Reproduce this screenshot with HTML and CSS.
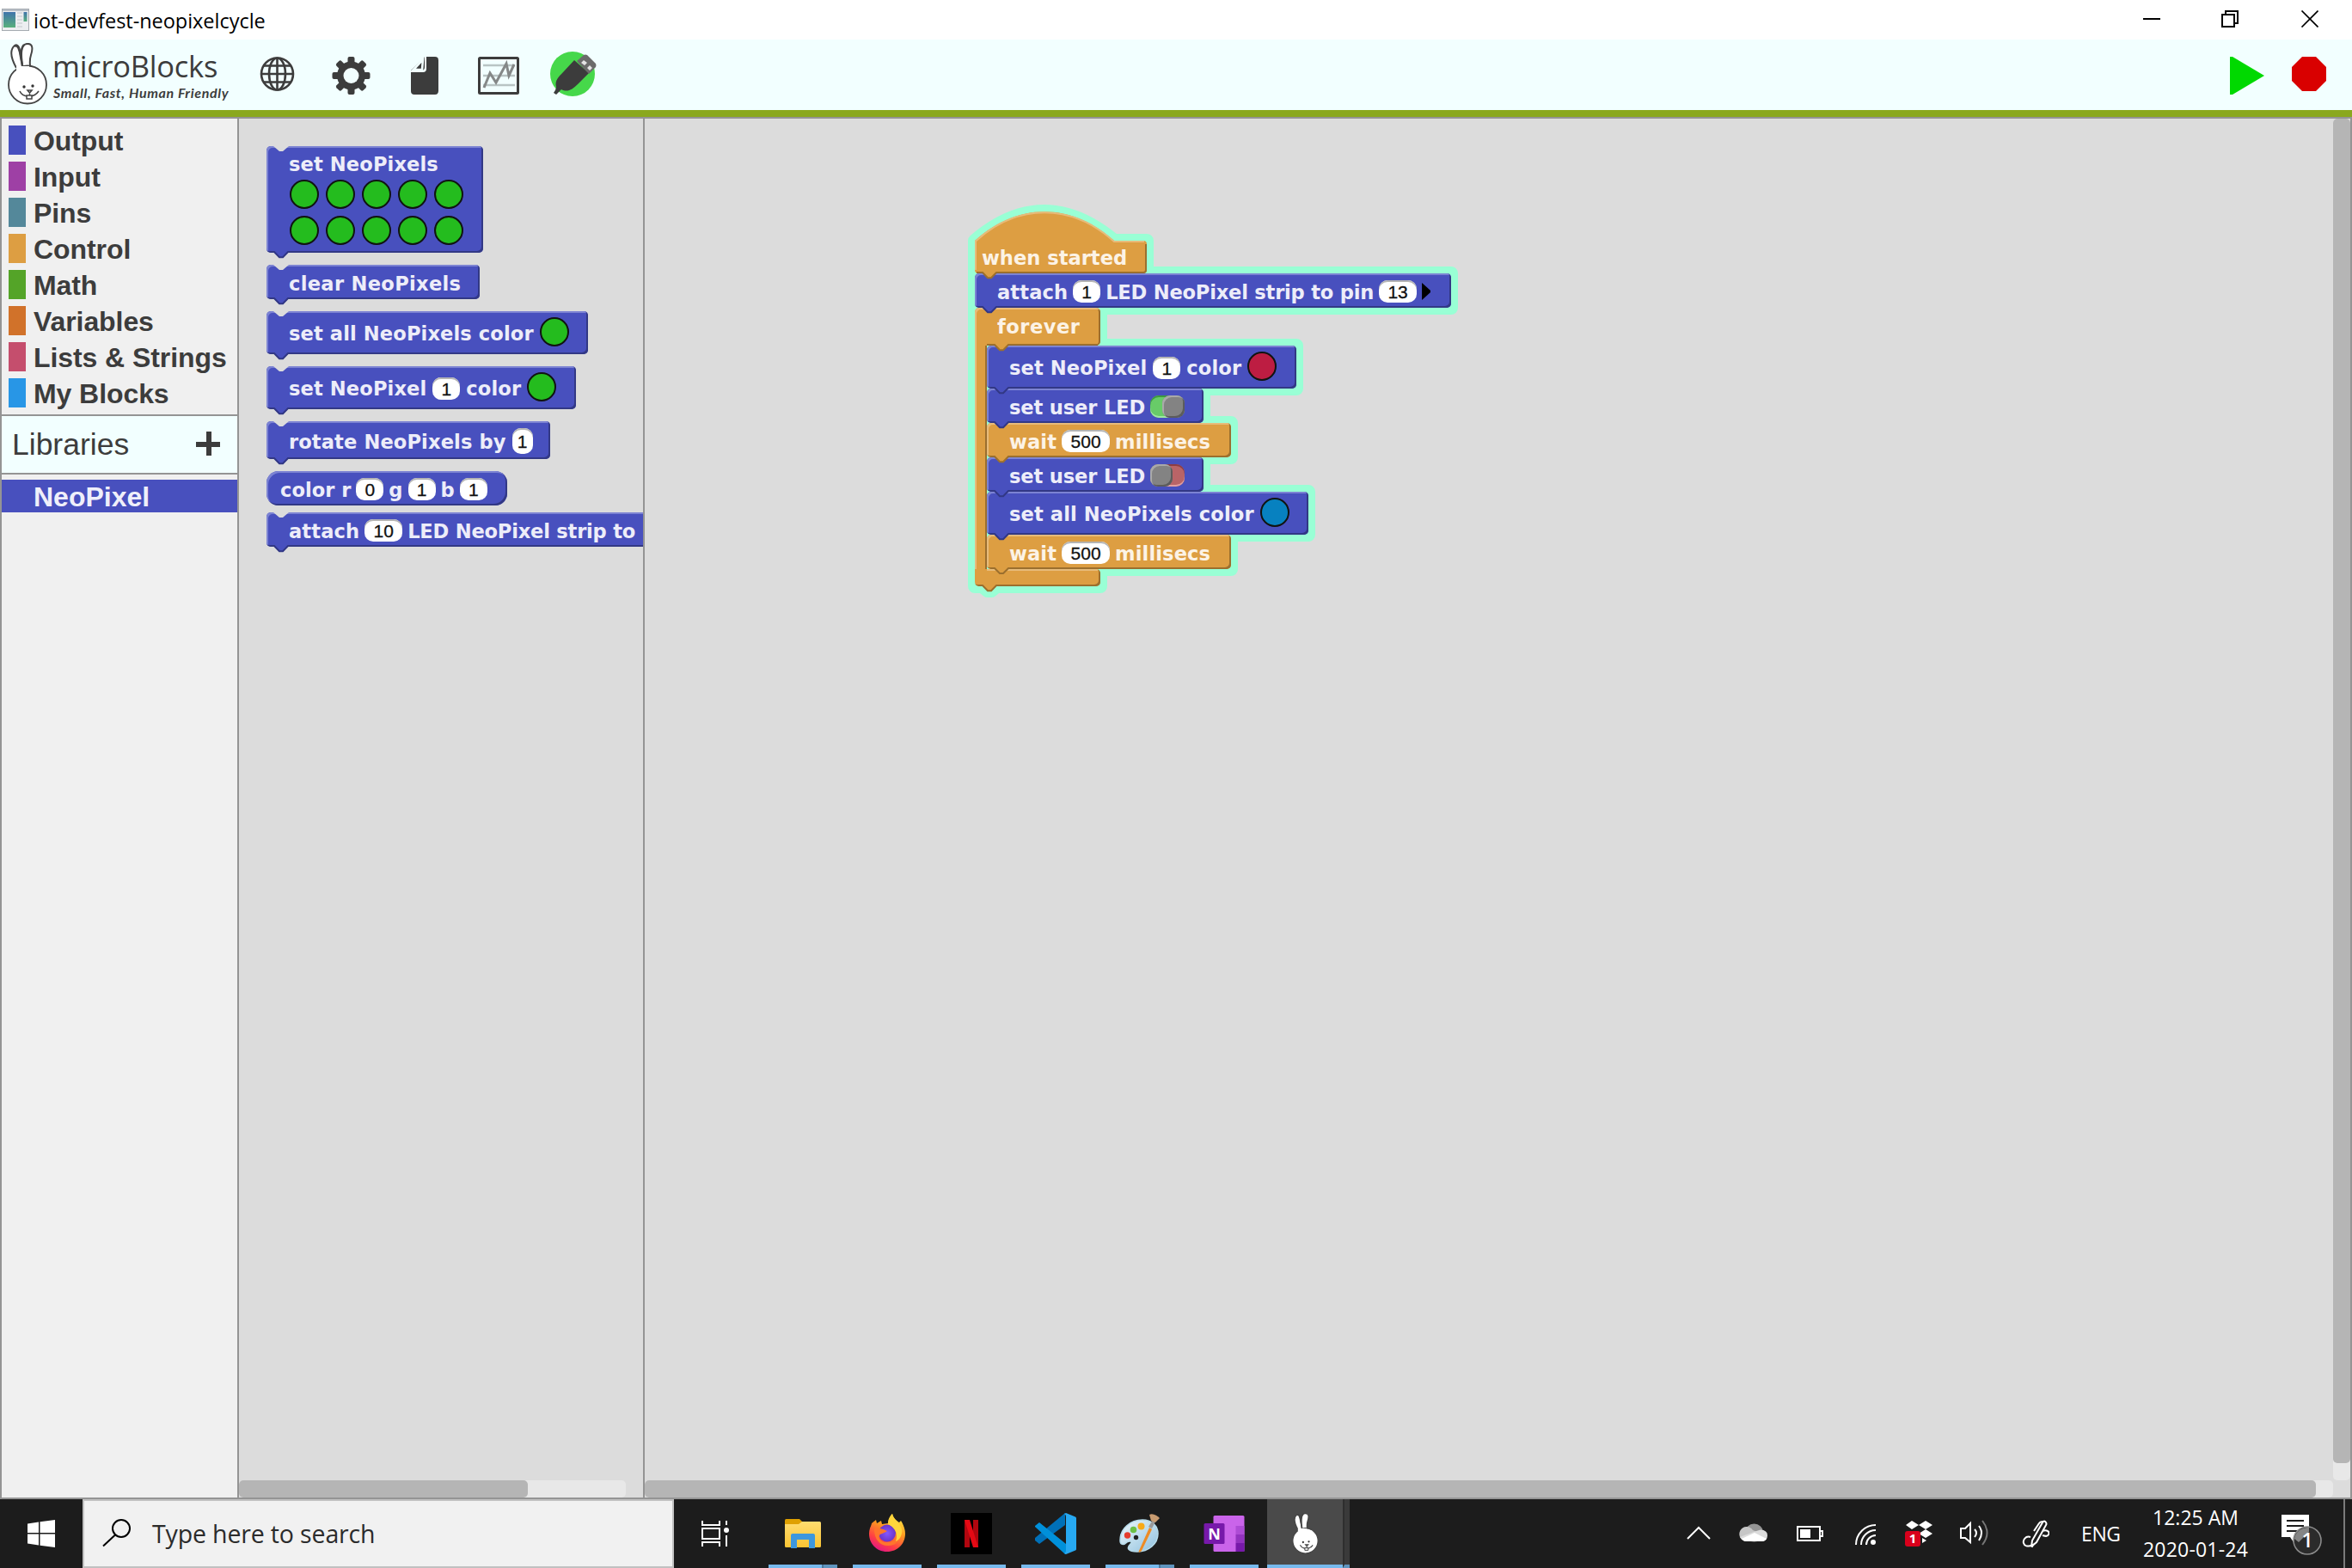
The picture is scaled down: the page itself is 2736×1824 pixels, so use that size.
FILE: index.html
```html
<!DOCTYPE html>
<html lang="en">
<head>
<meta charset="utf-8">
<title>iot-devfest-neopixelcycle</title>
<link rel="stylesheet" href="styles.css">
</head>
<body>
<svg width="0" height="0" class="defs">
  <symbol id="notch" viewBox="0 0 20 8"><path class="notch-fill" d="M1 0 L8 6 H12 L19 0Z"/></symbol>
  <symbol id="tab" viewBox="0 0 20 10"><path class="tab-fill" d="M0 0 H20 V2 H18 L12 8 H8 L2 2 H0Z"/><path class="tab-line" d="M0 1 H2 L8 7.2 H12 L18 1 H20"/></symbol>
  <symbol id="bunny" viewBox="0 0 46 72">
    <path d="M10 29 C5 20 1 9 8 3 C13 0 14 8 15 14 L17 27 M17 27 C15 16 14 2 22 1 C30 0 29 8 27 14 C25 20 26 24 26 28" fill="#fff" stroke="#444" stroke-width="2"/>
    <path d="M8 4 C12 1 14 9 15 16 L17 26 C15 14 16 5 19 2" fill="none" stroke="#444" stroke-width="2.4"/>
    <ellipse cx="23" cy="48.500" rx="22" ry="22" fill="#fff" stroke="#444" stroke-width="1.800"/>
    <path d="M10 27 H25 V32 H10Z" fill="#fff"/>
    <circle cx="19" cy="51" r="1.700" fill="#333"/><circle cx="29" cy="50" r="1.700" fill="#333"/>
    <path d="M23 55 H28 L25.500 58Z M25.500 57 V61 M14 56 C17 63 30 65 36 56" fill="none" stroke="#444" stroke-width="1.600"/>
    <path d="M22 61 H28 V65 H22Z" fill="#fff" stroke="#444" stroke-width="1.500"/>
  </symbol>
</svg>

<header class="titlebar">
  <svg class="app-icon" width="32" height="26" viewBox="0 0 32 26"><rect x=".5" y=".5" width="31" height="25" fill="#eceef0" stroke="#a5abb1"/><rect x="1" y="1" width="30" height="2" fill="#b9c0c8"/><defs><linearGradient id="ag" x1="0" y1="0" x2="0" y2="1"><stop offset="0" stop-color="#3f74ab"/><stop offset="1" stop-color="#58b07c"/></linearGradient></defs><rect x="2" y="4" width="14" height="18" fill="url(#ag)"/><path d="M18 5H24 M18 9H24 M18 13H24 M18 17H24 M18 21H24" stroke="#c2c6ca"/><rect x="25.500" y="4" width="4" height="11" fill="url(#ag)"/></svg>
  <span class="window-title">iot-devfest-neopixelcycle</span>
  <svg class="window-buttons" width="204" height="20" viewBox="0 0 204 20" fill="none" stroke="#000" stroke-width="2"><path d="M0 10H20"/><path d="M92 5H106V19H92Z M96 5V1H110V15H106"/><path d="M184.500 .5L203.500 19.500M203.500 .5L184.500 19.500" stroke-width="1.700"/></svg>
</header>

<nav class="toolbar">
  <svg class="bunny-logo" width="46" height="72"><use href="#bunny"/></svg>
  <div class="brand"><span class="brand-name">microBlocks</span><span class="brand-tag">Small, Fast, Human Friendly</span></div>
  <svg class="tools" width="394" height="56" viewBox="0 0 394 56">
    <g fill="none" stroke="#3c3c3c" stroke-width="2.600"><circle cx="20.500" cy="28" r="18.500"/><ellipse cx="20.500" cy="28" rx="9.500" ry="18.500"/><path d="M20.500 9V47M2 28H39M4.500 18.500H36.500M4.500 37.500H36.500"/></g>
    <g transform="translate(106.500 30)" fill="#3c3c3c"><g id="teeth"><rect x="-4" y="-22" width="8" height="44" rx="2"/><rect x="-22" y="-4" width="44" height="8" rx="2"/></g><use href="#teeth" transform="rotate(45)"/><circle r="16.500"/><circle r="9" fill="#f2ffff"/></g>
    <path d="M194 8H204Q208 8 208 12V48Q208 52 204 52H180Q176 52 176 48V26H190Q194 26 194 22Z" fill="#3c3c3c"/><path d="M192 8L176 24H188Q192 24 192 20Z" fill="#3c3c3c"/><path d="M190 11L179 23H189Z" fill="none" stroke="#f2ffff" stroke-width="2.600"/>
    <rect x="255.500" y="9.500" width="45" height="41" rx="1" fill="none" stroke="#3c3c3c" stroke-width="3"/><g fill="none"><path d="M260 18H297M260 30H297M260 41H297" stroke="#b9c4c4" stroke-width="2.600"/><path d="M261 44L268 27L275 38L287 16L290 30L296 17" stroke="#858888" stroke-width="3"/></g>
    <circle cx="364" cy="28" r="26" fill="#46d84a"/>
    <path d="M342 50C344 47 345 45 345 43C343 36 348 31 353 26L366 12L383 27L370 40C364 46 358 50 351 46L345 52Z" fill="#3c3c3c"/><path d="M369 13L377 6Q379 5 381 6L391 16Q392 18 391 20L383 28Z" fill="#6b6b6b"/><path d="M377 12L381 15L378 18L374 15ZM384 18L387 21L384 24L381 21Z" fill="#e4e4e4"/>
  </svg>
  <svg class="run" width="112" height="44" viewBox="0 0 112 44"><path d="M0 0L3 0L40 22L3 44H0Z" fill="#00d900"/><path d="M84 0H100L112 12V28L100 40H84L72 28V12Z" fill="#d90000"/></svg>
</nav>

<main class="workspace">
  <aside class="sidebar">
    <ul class="categories">
      <li><i class="output"></i>Output</li>
      <li><i class="input"></i>Input</li>
      <li><i class="pins"></i>Pins</li>
      <li><i class="control"></i>Control</li>
      <li><i class="math"></i>Math</li>
      <li><i class="variables"></i>Variables</li>
      <li><i class="lists"></i>Lists &amp; Strings</li>
      <li><i class="myblocks"></i>My Blocks</li>
    </ul>
    <div class="libraries"><span>Libraries</span><svg width="28" height="28" viewBox="0 0 28 28"><path d="M15 0V28M0 15H28" stroke="#3c3c3c" stroke-width="6"/></svg></div>
    <div class="library selected">NeoPixel</div>
  </aside>

  <section class="palette">
    <div class="palette-blocks">
      <div class="block blue grid-block"><svg class="notch"><use href="#notch"/></svg><span>set NeoPixels</span>
        <div class="pixels"><b class="dot"></b><b class="dot"></b><b class="dot"></b><b class="dot"></b><b class="dot"></b><b class="dot"></b><b class="dot"></b><b class="dot"></b><b class="dot"></b><b class="dot"></b></div><svg class="tab"><use href="#tab"/></svg></div>
      <div class="block blue clear"><svg class="notch"><use href="#notch"/></svg><span>clear NeoPixels</span><svg class="tab"><use href="#tab"/></svg></div>
      <div class="block blue tall set-all"><svg class="notch"><use href="#notch"/></svg><span>set all NeoPixels color</span><b class="dot"></b><svg class="tab"><use href="#tab"/></svg></div>
      <div class="block blue tall set-one"><svg class="notch"><use href="#notch"/></svg><span>set NeoPixel</span><em>1</em><span>color</span><b class="dot"></b><svg class="tab"><use href="#tab"/></svg></div>
      <div class="block blue rotate"><svg class="notch"><use href="#notch"/></svg><span>rotate NeoPixels by</span><em class="narrow">1</em><svg class="tab"><use href="#tab"/></svg></div>
      <div class="block blue reporter"><span>color r</span><em>0</em><span>g</span><em>1</em><span>b</span><em>1</em></div>
      <div class="block blue attach-10"><svg class="notch"><use href="#notch"/></svg><span>attach</span><em class="two">10</em><span class="strip">LED NeoPixel strip to pin</span><svg class="tab"><use href="#tab"/></svg></div>
    </div>
    <div class="h-track"><div class="thumb"></div></div>
  </section>

  <section class="canvas">
    <div class="script">
      <svg class="glow" width="580" height="470" viewBox="-12 -12 580 470" fill="#99ffd5" stroke="#99ffd5" stroke-width="16" stroke-linejoin="round"><path d="M0 34Q80 -34 162 34H200V72H554V112H146V156H374V206H266V246H298V286H266V326H388V376H298V416H146V436H25L19 441H15L9 436H0Z"/></svg>
      <div class="hat orange"><svg class="hat-shape" width="200" height="72" viewBox="0 0 200 72"><path d="M0 34C50 -11 112 -11 162 34H196Q200 34 200 38V68Q200 72 196 72H4Q0 72 0 68Z" fill="#dd9e42"/><path d="M1 68V34.500C50 -10 112 -10 162 35H197" fill="none" stroke="#e7bb7b" stroke-width="2"/><path d="M2 71H196Q199 71 199 68V38" fill="none" stroke="#9b6f2e" stroke-width="2"/></svg><span>when started</span><svg class="tab"><use href="#tab"/></svg></div>
      <div class="block blue attach-1"><span>attach</span><em>1</em><span class="strip">LED NeoPixel strip to pin</span><em class="two">13</em><i class="arrow"></i><svg class="tab"><use href="#tab"/></svg></div>
      <div class="loop orange">
        <div class="block orange loop-head"><span>forever</span><svg class="tab"><use href="#tab"/></svg></div>
        <div class="loop-body">
          <div class="block blue tall set-one"><span>set NeoPixel</span><em>1</em><span>color</span><b class="dot red"></b><svg class="tab"><use href="#tab"/></svg></div>
          <div class="block blue led"><span>set user LED</span><i class="toggle on"></i><svg class="tab"><use href="#tab"/></svg></div>
          <div class="block orange wait"><span>wait</span><em class="three">500</em><span>millisecs</span><svg class="tab"><use href="#tab"/></svg></div>
          <div class="block blue led"><span>set user LED</span><i class="toggle"></i><svg class="tab"><use href="#tab"/></svg></div>
          <div class="block blue tall set-all"><span>set all NeoPixels color</span><b class="dot azure"></b><svg class="tab"><use href="#tab"/></svg></div>
          <div class="block orange wait"><span>wait</span><em class="three">500</em><span>millisecs</span></div>
        </div>
        <div class="block orange loop-foot"><svg class="inner-tab" width="20" height="10" viewBox="0 0 20 10"><path d="M0 0H20V2H18L12 8H8L2 2H0Z" fill="#dd9e42"/><path d="M0 1H2L8 7H12L18 1H20" fill="none" stroke="#9b6f2e" stroke-width="2"/></svg><svg class="tab"><use href="#tab"/></svg></div>
      </div>
    </div>
    <div class="v-track"><div class="thumb"></div></div>
    <div class="h-track"><div class="thumb"></div></div>
  </section>
</main>

<footer class="taskbar">
  <div class="start"><svg width="32" height="32" viewBox="0 0 32 32" fill="#fff"><path d="M0 4.500L13 2.500V15H0ZM14.500 2.300L32 0V15H14.500ZM0 16.500H13V29.500L0 27.500ZM14.500 16.500H32V32L14.500 29.700Z"/></svg></div>
  <div class="search"><svg width="34" height="34" viewBox="0 0 34 34" fill="none" stroke="#000" stroke-width="2"><circle cx="22" cy="12" r="10"/><path d="M15 19.500L1 32.500"/></svg><span>Type here to search</span></div>
  <div class="task view"><svg width="32" height="30" viewBox="0 0 32 30" fill="none" stroke="#fff" stroke-width="2"><path d="M1 0V5H21V0M1 9H21V21H1ZM1 30V25H21V30M29 0V5M29 17V30"/><circle cx="29" cy="11" r="3" fill="#fff" stroke="none"/></svg></div>
  <div class="task open multi"><svg width="48" height="48" viewBox="0 0 48 48"><defs><linearGradient id="fg" x1="0" y1="0" x2="0" y2="1"><stop offset="0" stop-color="#ffdc70"/><stop offset="1" stop-color="#fac433"/></linearGradient></defs><path d="M3 14V8.500Q3 7 4.500 7H20L24 11V14Z" fill="#dfa000"/><path d="M3 13H19L23 10H43.500Q45 10 45 11.500V38.500Q45 40 43.500 40H4.500Q3 40 3 38.500Z" fill="url(#fg)"/><path d="M10 41V26Q10 24 12 24H36Q38 24 38 26V41H31V31H17V41Z" fill="#3d97dd"/></svg></div>
  <div class="task open"><svg width="48" height="48" viewBox="0 0 48 48"><defs><linearGradient id="ff" x1=".8" y1="0" x2=".3" y2="1"><stop offset="0" stop-color="#fff04a"/><stop offset=".4" stop-color="#ff9a1f"/><stop offset=".75" stop-color="#ff4043"/><stop offset="1" stop-color="#e31587"/></linearGradient><radialGradient id="fp"><stop offset="0" stop-color="#8457ff"/><stop offset="1" stop-color="#6b35c9"/></radialGradient></defs><path d="M3 24C3 18 6 14 6 12L11 8L12 12L17 9L18 13L25 12C25 7 28 3 30 1C31 6 35 9 38 11L40 9C42 12 45 18 45 24C45 36 36 45 24 45S3 36 3 24Z" fill="url(#ff)"/><circle cx="24" cy="23.500" r="10" fill="url(#fp)"/><path d="M9 19C13 16 20 19 24 21C20 24 16 24 15 26C13 31 19 34 24 34C34 34 37 27 33 20C41 26 38 38 26 38C17 39 9 32 9 19Z" fill="#ff752c"/><path d="M25 13C25 7 28 3 30 1C31 7 37 10 40 16C43 22 40 31 34 33C37 24 33 17 25 13Z" fill="#ffd53b"/></svg></div>
  <div class="task open"><svg width="48" height="48" viewBox="0 0 48 48"><rect width="48" height="48" fill="#000"/><path d="M16 8H22V40L16 40ZM26 8H32V40H26Z" fill="#b1060f"/><path d="M16 8H22L32 40H26Z" fill="#e50914"/></svg></div>
  <div class="task open"><svg width="48" height="48" viewBox="0 0 48 48"><path d="M5 36L0 32Q-1 30 0 29L35 0V14Z" fill="#0070b8"/><path d="M5 11L36 36V48Q35 48 34 47L0 16V15Z" fill="#0090da"/><path d="M36 0L47 4.500Q48 5 48 6V42Q48 43 47 43.500L36 48L34 47Q36 46 36 44V4Q36 2 34 1Z" fill="#27a9f2"/></svg></div>
  <div class="task open multi"><svg width="48" height="48" viewBox="0 0 48 48"><defs><linearGradient id="pg" x1="0" y1="0" x2="1" y2="1"><stop offset="0" stop-color="#eef8fc"/><stop offset="1" stop-color="#8ec0de"/></linearGradient></defs><path d="M1 32C1 18 13 8 27 8C38 8 45 15 45 24C45 36 34 45 21 45C10 45 8 41 13 36C16 33 12 32 9 34C5 38 1 37 1 32Z" fill="url(#pg)" stroke="#b6dbea" stroke-width="1.500"/><circle cx="9.500" cy="26" r="3.700" fill="#e53d2e"/><circle cx="16.500" cy="19.500" r="3.800" fill="#6cc146"/><circle cx="25.500" cy="15.500" r="4" fill="#f8aa18"/><circle cx="19.500" cy="28.500" r="2.700" fill="#222"/><path d="M35 17L38 19L26 44Q23 47 22.500 45Z" fill="#ed8b24"/><path d="M34 16L39 8L42 10L38 18Z" fill="#9a9a9a"/><path d="M37 9L35 2C39 0 44 3 47 6L42 11Z" fill="#c89b70"/></svg></div>
  <div class="task open"><svg class="onenote" width="48" height="48" viewBox="0 0 48 48"><rect x="11.500" y="3" width="36" height="42" rx="1.500" fill="#ca64ea"/><path d="M37.500 15H47.500V25H37.500Z" fill="#ae4bd5"/><path d="M37.500 25H47.500V35H37.500Z" fill="#9332bf"/><path d="M37.500 35H47.500V45H37.500Z" fill="#7719aa"/><rect x=".5" y="12" width="24" height="24" rx="1.500" fill="#7719aa"/><text x="12.500" y="30.500" text-anchor="middle" font-family="Open Sans, sans-serif" font-weight="700" font-size="18" fill="#fff">N</text></svg></div>
  <div class="task active"><svg width="31" height="48"><use href="#bunny"/></svg></div>
  <div class="active-edge"></div>
  <svg class="tray" width="422" height="34" viewBox="0 0 422 34" fill="none" stroke="#fff" stroke-width="2">
    <path d="M1 23L14 10L27 23"/>
    <g stroke="none"><circle cx="78.500" cy="16" r="10.500" fill="#949494"/><path d="M70 26A8.500 8.500 0 1 1 77 13L92 19Q94 26 87 26Z" fill="#c6c6c6"/><path d="M62 21Q65 26 70 26H87Q94 26 94 19Q94 13 86 12.500L78 15Z" fill="#dcdcdc"/><path d="M64 23L79 16L93 23Q91 26 88 26H70Q66 26 64 23Z" fill="#fff"/></g>
    <path d="M129 9H155V25H129ZM156 14H158V20H156"/><rect x="132" y="12" width="12" height="10" fill="#fff" stroke="none"/>
    <path d="M197 30A23 23 0 0 1 220 7M203 30A17 17 0 0 1 220 13M209 30A11 11 0 0 1 220 19"/><circle cx="217" cy="27" r="3" fill="#fff" stroke="none"/>
    <g stroke="none"><path d="M255 7L262 2L270 7L262 12ZM270 7L278 2L286 7L278 12ZM270 17L278 12L286 17L278 22ZM274 22L279 25L274 28Z" fill="#fff"/><rect x="254" y="14" width="18" height="18" rx="3" fill="#d9001b"/><text x="263" y="28" text-anchor="middle" font-family="Open Sans, sans-serif" font-weight="700" font-size="15" fill="#fff">1</text></g>
    <path d="M319 11H324L330 5V27L324 22H319Z M335 12Q339 16 335 21M340 8Q346 16 340 25"/><path d="M344 2Q355 16 344 30" stroke="#777"/>
    <g transform="translate(391 1)"><path d="M9 20C3 18 0 24 1 27C2 31 6 31 9 30L11 31L13 28M10 31L11 24L23 3Q25 0 27 3Q28 5 27 6L16 26L10 31M13 13L19 4Q20 2 23 2M23 13C28 11 32 14 30 17C29 20 26 19 23 18" /></g>
  </svg>
  <span class="language">ENG</span>
  <div class="clock"><span class="time">12:25 AM</span><span class="date">2020-01-24</span></div>
  <svg class="notices" width="50" height="50" viewBox="0 0 50 50"><path d="M0 2H32V28H20L14 34L10 28H0Z" fill="#fff"/><path d="M6 9H26M6 15H26M6 21H18" stroke="#1c1c1c" stroke-width="2"/><circle cx="30" cy="32" r="16" fill="#2b2b2b" stroke="#8b8b8b" stroke-width="1.600"/><path d="M15 30A15.500 15.500 0 0 1 32 17V22L20 34Z" fill="#858585"/><text x="30" y="40" text-anchor="middle" font-family="Open Sans, sans-serif" font-weight="600" font-size="23" fill="#fff">1</text></svg>
  <div class="show-desktop"></div>
</footer>
</body>
</html>
```
FILE: styles.css
```css
* { box-sizing: border-box; }
html { overflow: hidden; }
body { margin: 0; width: 2736px; height: 1824px; overflow: hidden; display: flex; flex-direction: column; background: #dcdcdc; font-family: "Liberation Sans", Arial, sans-serif; }
svg { display: block; flex: none; }
.defs { position: absolute; }

.titlebar { height: 46px; flex: none; background: #fff; display: flex; align-items: center; padding: 0 39px 0 2px; }
.window-title { margin-left: 5px; font: 23.5px/46px "Open Sans", sans-serif; letter-spacing: -0.03px; padding-top: 2px; color: #000; }
.window-buttons { margin-left: auto; margin-top: -2px; }

.toolbar { height: 90px; flex: none; background: #f2ffff; border-bottom: 8px solid #8aa81e; display: flex; align-items: flex-start; padding-left: 9px; padding-right: 30px; }
.bunny-logo { margin-top: 4px; }
.brand { width: 246px; margin-left: 7px; display: flex; flex-direction: column; color: #3c3c3c; white-space: nowrap; }
.brand-name { font: 500 34.5px/40px "Open Sans", sans-serif; margin-top: 11px; margin-left: -1px; letter-spacing: -0.25px; }
.brand-tag { font: italic 700 16px/20px Lato, sans-serif; margin-top: 1px; letter-spacing: 0.64px; }
.tools { margin-top: 12px; margin-left: -6px; }
.run { margin-left: auto; margin-top: 20px; }

.workspace { height: 1608px; flex: none; display: flex; border: 2px solid #949494; }
.sidebar { width: 276px; flex: none; background: #f0f0f0; border-right: 2px solid #949494; color: #3c3c3c; }
.categories { list-style: none; margin: 0; padding: 4px 0 0 8px; height: 344px; }
.categories li { height: 42px; display: flex; align-items: center; gap: 9px; font-weight: 700; font-size: 32px; line-height: 42px; letter-spacing: -0.08px; white-space: nowrap; padding-top: 2px; }
.categories i { width: 20px; height: 34px; margin-top: -2px; }
.output { background: #4850be; }
.input { background: #9e40a5; }
.pins { background: #54889a; }
.control { background: #dd9e42; }
.math { background: #54a428; }
.variables { background: #d1722a; }
.lists { background: #c54e6d; }
.myblocks { background: #2896e6; }
.libraries { height: 70px; background: #f2ffff; border-top: 2px solid #949494; border-bottom: 2px solid #949494; display: flex; align-items: center; justify-content: space-between; padding: 0 20px 0 12px; font-size: 35.5px; }
.libraries svg { margin-top: -3px; }
.library { height: 38px; margin-top: 6px; padding-left: 37px; font-weight: 700; font-size: 32px; line-height: 41px; }
.selected { background: #4850be; color: #efeffa; }

.palette { width: 472px; flex: none; border-right: 2px solid #949494; display: flex; flex-direction: column; justify-content: space-between; overflow: hidden; }
.palette-blocks { padding: 32px 0 0 32px; display: flex; flex-direction: column; align-items: flex-start; gap: 14px; }
.thumb { background: #b5b5b5; border-radius: 5px; }
.h-track { height: 20px; background: #e8e8e8; border-radius: 5px; }
.h-track .thumb { height: 20px; }
.palette .h-track { width: 450px; }
.palette .thumb { width: 336px; }

.blue { --fill: #4850be; --light: #7c83d3; --dark: #323885; --ink: #ededf9; }
.orange { --fill: #dd9e42; --light: #e7bb7b; --dark: #9b6f2e; --ink: #fcf3e6; }
.block { position: relative; height: 40px; flex: none; display: flex; align-items: center; gap: 7px; padding: 2px 0 0 26px; background: var(--fill); border-radius: 5px; box-shadow: inset -2px -2px 0 var(--dark), inset 2px 2px 0 var(--light); color: var(--ink); font: 700 22.600px/26px "DejaVu Sans", sans-serif; letter-spacing: 0.1px; white-space: nowrap; }
.block span { padding-top: 2px; }
.tall { height: 50px; }
.tall span { padding-top: 0; }
.grid-block { width: 252px; height: 124px; flex-direction: column; align-items: flex-start; gap: 5px; padding-top: 6px; }
.pixels { display: grid; grid-template-columns: repeat(5, 34px); gap: 8px; padding-left: 1px; }
.clear { width: 248px; letter-spacing: 0.3px; }
.set-all { width: 374px; }
.set-one { width: 360px; }
.rotate { width: 330px; height: 44px; }
.reporter { width: 280px; padding-left: 16px; border-radius: 14px; margin-bottom: -6px; gap: 6px; letter-spacing: 0; }
.attach-10 { width: 560px; }
.attach-1 { width: 554px; }
.attach-10, .attach-1 { gap: 6px; }
.strip { letter-spacing: -0.22px; }
.led { width: 252px; letter-spacing: -0.15px; gap: 6px; }
.wait { width: 284px; gap: 6px; }
.notch { position: absolute; left: 7px; top: 0; width: 20px; height: 8px; }
.notch-fill { fill: #dcdcdc; }
.tab { position: absolute; left: 7px; bottom: -8px; width: 20px; height: 10px; z-index: 2; }
.tab-fill { fill: var(--fill); }
.tab-line { fill: none; stroke: var(--dark); stroke-width: 2; }
.dot { width: 34px; height: 34px; flex: none; border-radius: 50%; background: #24bc1e; border: 2px solid #101410; }
.tall > .dot { margin-top: -4px; }
.red { background: #bd1d42; }
.azure { background: #0781c0; }
.block em { width: 32px; height: 26px; flex: none; background: #fff; border-radius: 10px; box-shadow: inset 0 2px 0 #b4b4b4; font: 400 21px/27px "Liberation Sans", Arial, sans-serif; letter-spacing: 0; text-align: center; color: #111; -webkit-text-stroke: 0.3px #111; }
.block .two { width: 44px; }
.block .three { width: 56px; }
.block .narrow { width: 24px; height: 30px; line-height: 31px; }
.arrow { width: 10px; height: 20px; background: #000; clip-path: polygon(0 0, 100% 45%, 100% 55%, 0 100%); }
.toggle { width: 40px; height: 26px; border-radius: 10px; background: #b96467; display: flex; box-shadow: inset 0 2px 0 #8b3d45, inset 0 -2px 0 #e09fa1; }
.toggle::before { content: ""; width: 26px; height: 26px; border-radius: 9px; background: #838383; box-shadow: inset 2px 2px 0 #a9a9a9, inset -2px -2px 0 #5c5c5c; }
.toggle.on { background: #68cb68; justify-content: flex-end; box-shadow: inset 0 2px 0 #3d993f, inset 0 -2px 0 #a0e8a2; }

.canvas { position: relative; flex: 1; display: grid; grid-template-columns: 1fr 20px; grid-template-rows: 1fr 20px; }
.canvas .v-track { grid-column: 2; grid-row: 1; background: #e8e8e8; border-radius: 5px; }
.canvas .v-track .thumb { height: 1564px; }
.canvas .h-track { grid-column: 1; grid-row: 2; }
.canvas .h-track .thumb { width: 1944px; }
.script { position: absolute; left: 384px; top: 108px; display: flex; flex-direction: column; align-items: flex-start; }
.glow { position: absolute; left: -12px; top: -12px; }
.hat { position: relative; width: 200px; height: 72px; padding: 41px 0 0 8px; color: var(--ink); font: 700 22.600px/26px "DejaVu Sans", sans-serif; white-space: nowrap; }
.hat-shape { position: absolute; left: 0; top: 0; }
.hat span { position: relative; }
.loop { position: relative; display: flex; flex-direction: column; }
.loop-head { width: 146px; height: 44px; padding-bottom: 4px; letter-spacing: 0.5px; border-bottom-left-radius: 0; box-shadow: inset 2px 2px 0 var(--light), inset -2px 0 0 var(--dark); }
.loop-head::after { content: ""; position: absolute; left: 14px; right: 3px; bottom: 0; height: 2px; background: var(--dark); }
.loop-head .tab { left: 21px; }
.loop-body { padding-left: 14px; background: linear-gradient(90deg, #e7bb7b 2px, #dd9e42 2px, #dd9e42 12px, #9b6f2e 12px, #9b6f2e 14px, transparent 14px); }
.loop-foot { width: 146px; height: 20px; padding: 0; border-top-left-radius: 0; box-shadow: inset -2px -2px 0 var(--dark); }
.loop-foot::before { content: ""; position: absolute; left: 14px; right: 3px; top: 0; height: 2px; background: var(--light); }
.inner-tab { position: absolute; left: 21px; top: -2px; }

.taskbar { height: 80px; flex: none; background: #1c1c1c; display: flex; align-items: center; color: #fff; font-family: "Open Sans", sans-serif; white-space: nowrap; }
.start { width: 96px; display: flex; justify-content: center; }
.search { width: 688px; height: 80px; background: #f1f1f1; border: 2px solid #c1c1c1; display: flex; align-items: center; padding-left: 21px; color: #2b2b2b; font-size: 28.500px; letter-spacing: -0.15px; }
.search svg { margin-bottom: 2px; }
.search span { margin-left: 24px; }
.task { position: relative; width: 98px; height: 80px; display: flex; align-items: center; justify-content: center; }
.view { width: 101px; padding-right: 5px; }
.task.open::after { content: ""; position: absolute; left: 9px; width: 80px; bottom: 0; height: 4px; background: #76b9ed; }
.task.multi::after { background: linear-gradient(90deg, #76b9ed 62px, #4b779a 62px, #4b779a 64px, #5f94be 64px); }
.task.active { width: 88px; background: #4a4a4a; border-bottom: 4px solid #76b9ed; padding-top: 4px; margin-left: 1px; padding-right: 0; }
.active-edge { width: 8px; height: 80px; border-left: 2px solid #2e2e2e; background: #3a3a3a; border-bottom: 4px solid #5f94be; }
.tray { margin-left: 392px; }
.language { margin-left: 37px; width: 46px; font-size: 23px; letter-spacing: -0.4px; }
.clock { width: 130px; margin-left: 22px; display: flex; flex-direction: column; align-items: center; font-size: 23px; line-height: 37px; letter-spacing: 0; padding-bottom: 1px; }
.date { letter-spacing: 0.2px; }
.notices { margin-left: 35px; margin-top: 2px; }
.show-desktop { width: 10px; height: 80px; margin-left: auto; border-left: 2px solid #7b7b7b; }
```
